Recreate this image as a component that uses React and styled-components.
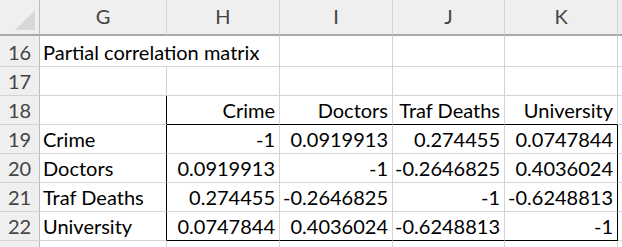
import React from 'react';
import styled, { createGlobalStyle } from 'styled-components';

const GlobalStyle = createGlobalStyle`
  html, body {
    margin: 0;
    padding: 0;
    background: #ffffff;
    overflow: hidden;
  }
`;

const GRID = '#d4d4d4';
const HEAD_BG = '#efefef';

const Sheet = styled.div`
  display: grid;
  grid-template-columns: 40px 127px 113px 113px 112px 113px 1fr;
  grid-template-rows: 36px 31px repeat(7, 29px);
  width: 622px;
  height: 247px;
  overflow: hidden;
  font-family: Lato, 'Liberation Sans', sans-serif;
  font-size: 20px;
  color: #000;
`;

const Corner = styled.div`
  position: relative;
  background: ${HEAD_BG};
  border-right: 1px solid #bdbdbd;
  border-bottom: 2px solid #a8a8a8;

  &::after {
    content: '';
    position: absolute;
    right: 4px;
    bottom: 4px;
    width: 0;
    height: 0;
    border-left: 20px solid transparent;
    border-bottom: 20px solid #d8d8d8;
  }
`;

const ColHead = styled.div`
  display: flex;
  align-items: center;
  justify-content: center;
  padding-bottom: 2px;
  background: ${HEAD_BG};
  border-right: 1px solid ${GRID};
  border-bottom: 2px solid #a8a8a8;
  color: #444;
`;

const RowNum = styled.div`
  display: flex;
  align-items: flex-end;
  justify-content: center;
  padding-bottom: 2px;
  background: ${HEAD_BG};
  border-right: 1px solid #bdbdbd;
  border-bottom: 1px solid ${GRID};
  color: #444;
`;

const Cell = styled.div`
  display: flex;
  align-items: flex-end;
  justify-content: ${(p) => (p.$num ? 'flex-end' : 'flex-start')};
  padding: 0 4px 2px 3px;
  white-space: nowrap;
  overflow: visible;
  border-right: 1px solid ${(p) => (p.$edgeRight ? '#000' : GRID)};
  border-bottom: 1px solid ${(p) => (p.$edgeBottom ? '#000' : GRID)};
  ${(p) => p.$spill && 'border-right-color: transparent;'}
`;

const columns = ['G', 'H', 'I', 'J', 'K', ''];
const labels = ['Crime', 'Doctors', 'Traf Deaths', 'University'];

const matrix = [
  ['-1', '0.0919913', '0.274455', '0.0747844'],
  ['0.0919913', '-1', '-0.2646825', '0.4036024'],
  ['0.274455', '-0.2646825', '-1', '-0.6248813'],
  ['0.0747844', '0.4036024', '-0.6248813', '-1'],
];

export default function App() {
  const rows = [];

  // row 16: title spilling over into column H
  rows.push(
    <React.Fragment key="16">
      <RowNum>16</RowNum>
      <Cell $spill>Partial correlation matrix</Cell>
      {columns.slice(1).map((c, i) => (
        <Cell key={i} />
      ))}
    </React.Fragment>
  );

  rows.push(
    <React.Fragment key="17">
      <RowNum>17</RowNum>
      {columns.map((c, i) => (
        <Cell key={i} />
      ))}
    </React.Fragment>
  );

  // row 18: headings, bottom edge is the top of the boxed range
  rows.push(
    <React.Fragment key="18">
      <RowNum>18</RowNum>
      <Cell $edgeRight />
      {labels.map((l) => (
        <Cell key={l} $num $edgeBottom>
          {l}
        </Cell>
      ))}
      <Cell />
    </React.Fragment>
  );

  matrix.forEach((vals, r) => {
    const last = r === matrix.length - 1;
    rows.push(
      <React.Fragment key={19 + r}>
        <RowNum>{19 + r}</RowNum>
        <Cell $edgeRight>{labels[r]}</Cell>
        {vals.map((v, c) => (
          <Cell key={c} $num $edgeBottom={last} $edgeRight={c === vals.length - 1}>
            {v}
          </Cell>
        ))}
        <Cell />
      </React.Fragment>
    );
  });

  // row 23 is only a sliver at the bottom edge
  rows.push(
    <React.Fragment key="23">
      <RowNum />
      {columns.map((c, i) => (
        <Cell key={i} />
      ))}
    </React.Fragment>
  );

  return (
    <>
      <GlobalStyle />
      <Sheet>
        <Corner />
        {columns.map((c, i) => (
          <ColHead key={i}>{c}</ColHead>
        ))}
        {rows}
      </Sheet>
    </>
  );
}
